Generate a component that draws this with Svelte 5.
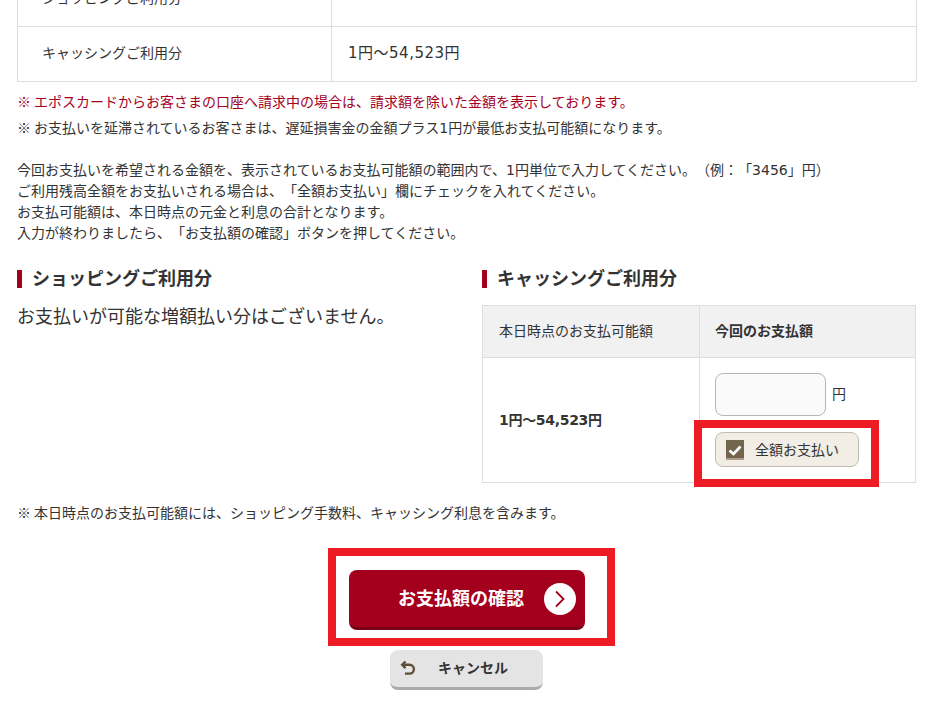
<script>
  const limits = [
    { label: 'ショッピングご利用分', value: '' },
    { label: 'キャッシングご利用分', value: '1円～54,523円' }
  ];

  const guide = [
    '今回お支払いを希望される金額を、表示されているお支払可能額の範囲内で、1円単位で入力してください。（例：「3456」円）',
    'ご利用残高全額をお支払いされる場合は、「全額お支払い」欄にチェックを入れてください。',
    'お支払可能額は、本日時点の元金と利息の合計となります。',
    '入力が終わりましたら、「お支払額の確認」ボタンを押してください。'
  ];

  let payAll = true;
</script>

<div class="page">
  <table class="summary">
    <tbody>
      {#each limits as row}
        <tr>
          <th>{row.label}</th>
          <td>{row.value}</td>
        </tr>
      {/each}
    </tbody>
  </table>

  <p class="note first"><span class="mark">※</span><span class="red">エポスカードからお客さまの口座へ請求中の場合は、請求額を除いた金額を表示しております。</span></p>
  <p class="note"><span class="mark">※</span>お支払いを延滞されているお客さまは、遅延損害金の金額プラス1円が最低お支払可能額になります。</p>

  <div class="guide">
    {#each guide as line}
      <p>{line}</p>
    {/each}
  </div>

  <div class="columns">
    <section class="col-left">
      <h2>ショッピングご利用分</h2>
      <p class="none">お支払いが可能な増額払い分はございません。</p>
    </section>

    <section class="col-right">
      <h2>キャッシングご利用分</h2>
      <table class="pay">
        <thead>
          <tr>
            <th class="avail">本日時点のお支払可能額</th>
            <th class="now">今回のお支払額</th>
          </tr>
        </thead>
        <tbody>
          <tr>
            <td class="range">1円～54,523円</td>
            <td class="entry">
              <div class="amount">
                <input type="text" aria-label="今回のお支払額" />
                <span>円</span>
              </div>
              <label class="all">
                <input type="checkbox" bind:checked={payAll} />
                <span class="box">
                  <svg width="18" height="18" viewBox="0 0 18 18" fill="none" stroke="#fff" stroke-width="2.6">
                    <polyline points="3.5 9.5 7.5 13 14.5 5.5"></polyline>
                  </svg>
                </span>
                <span class="all-text">全額お支払い</span>
              </label>
              <span class="hl hl-check"></span>
            </td>
          </tr>
        </tbody>
      </table>
    </section>
  </div>

  <p class="foot"><span class="mark">※</span>本日時点のお支払可能額には、ショッピング手数料、キャッシング利息を含みます。</p>

  <div class="actions">
    <div class="confirm-wrap">
      <button class="confirm">
        <span class="confirm-text">お支払額の確認</span>
        <span class="circle">
          <svg width="32" height="32" viewBox="0 0 32 32" fill="none" stroke="#a4001e" stroke-width="1.8">
            <polyline points="12 8.5 19.5 16 12 23.5"></polyline>
          </svg>
        </span>
      </button>
      <span class="hl hl-confirm"></span>
    </div>
    <button class="cancel">
      <svg width="16" height="16" viewBox="0 0 16 16" fill="none" stroke="#5c4d38" stroke-width="2.4">
        <path d="M5.5 1.5 L2.2 4.8 L5.5 8.1"></path>
        <path d="M2.4 4.8 H9.5 A4.4 4.4 0 0 1 9.5 13.6 H5"></path>
      </svg>
      <span>キャンセル</span>
    </button>
  </div>
</div>

<style>
  :global(body) {
    margin: 0;
    background: #fff;
  }

  .page {
    height: 709px;
    box-sizing: border-box;
    overflow: hidden;
    padding: 0 14px 0 17px;
    font-family: "DejaVu Sans", "Noto Sans CJK JP", sans-serif;
    font-size: 14px;
    color: #333;
    text-spacing-trim: space-all;
  }

  p {
    margin: 0;
  }

  .mark {
    margin-right: 3px;
    font-family: "Noto Sans CJK JP", sans-serif;
  }

  .summary {
    width: 900px;
    margin-top: -29px;
    border-collapse: collapse;
    table-layout: fixed;
  }

  .summary th,
  .summary td {
    height: 55px;
    padding: 0 0 5px;
    border: 1px solid #ddd;
    font-weight: normal;
    text-align: left;
    box-sizing: border-box;
  }

  .summary th {
    width: 314px;
    padding-left: 24px;
    font-size: 14px;
  }

  .summary td {
    padding-left: 16px;
    font-size: 15px;
    letter-spacing: 0.5px;
  }

  .note {
    line-height: 25px;
  }

  .note.first {
    margin-top: 7px;
  }

  .note.first .mark,
  .red {
    color: #a4001e;
  }

  .guide {
    margin-top: 19px;
    line-height: 21px;
  }

  .columns {
    display: flex;
    margin-top: 26px;
  }

  .col-left {
    width: 465px;
  }

  .col-right {
    width: 434px;
  }

  h2 {
    margin: 0;
    padding-left: 10px;
    border-left: 5px solid #a4001e;
    font-size: 18px;
    line-height: 18px;
    font-weight: bold;
    color: #333;
  }

  .none {
    margin-top: 17px;
    font-size: 18px;
    line-height: 24px;
  }

  .pay {
    width: 434px;
    margin-top: 17px;
    border-collapse: collapse;
    table-layout: fixed;
    font-size: 14px;
  }

  .pay th,
  .pay td {
    padding: 0 15px;
    border: 1px solid #ddd;
    text-align: left;
    box-sizing: border-box;
  }

  .pay th {
    height: 52px;
    padding-bottom: 4px;
    background: #f1f1f1;
  }

  .avail {
    width: 217px;
    font-weight: normal;
  }

  .pay .range {
    padding-left: 16px;
    padding-bottom: 2px;
    font-weight: bold;
    letter-spacing: -0.3px;
  }

  .pay .avail {
    padding-left: 16px;
  }

  .entry {
    position: relative;
    height: 125px;
    vertical-align: top;
  }

  .amount {
    display: flex;
    align-items: center;
    gap: 6px;
    margin-top: 15px;
  }

  .amount span {
    margin-bottom: 4px;
  }

  .amount input {
    width: 111px;
    height: 43px;
    box-sizing: border-box;
    border: 1px solid #b5b5b5;
    border-radius: 8px;
    background: #fafafa;
  }

  .all {
    display: flex;
    align-items: center;
    width: 144px;
    height: 35px;
    box-sizing: border-box;
    margin-top: 16px;
    padding-left: 10px;
    border: 1px solid #c2bcb0;
    border-radius: 8px;
    background: #f2ede5;
  }

  .all input {
    display: none;
  }

  .box {
    display: flex;
    align-items: center;
    justify-content: center;
    width: 18px;
    height: 20px;
    background: #73654c;
    box-shadow: inset 0 -2px 0 #a89e8c;
  }

  .all-text {
    margin-left: 11px;
    margin-bottom: 2px;
  }

  .hl {
    position: absolute;
    box-sizing: border-box;
    border: 8px solid #ed1c24;
    pointer-events: none;
  }

  .hl-check {
    left: -6px;
    top: 62px;
    width: 185px;
    height: 67px;
  }

  .foot {
    margin-top: 19px;
    line-height: 20px;
  }

  .actions {
    display: flex;
    flex-direction: column;
    align-items: center;
    width: 900px;
    margin-top: 47px;
  }

  .confirm-wrap {
    position: relative;
  }

  .confirm {
    display: flex;
    align-items: center;
    width: 236px;
    height: 60px;
    box-sizing: border-box;
    padding: 0 9px 0 49px;
    border: 0;
    border-bottom: 3px solid #760014;
    border-radius: 8px;
    background: #a4001e;
    color: #fff;
    font-family: inherit;
    font-size: 18px;
    font-weight: bold;
  }

  .confirm-text {
    margin-bottom: 4px;
  }

  .circle {
    display: flex;
    margin-left: auto;
    border-radius: 50%;
    background: #fff;
  }

  .hl-confirm {
    left: -21px;
    top: -22px;
    width: 287px;
    height: 98px;
  }

  .cancel {
    display: flex;
    align-items: center;
    width: 153px;
    height: 40px;
    box-sizing: border-box;
    margin: 20px 1px 0 0;
    padding: 0 0 2px 10px;
    border: 0;
    border-bottom: 3px solid #aaa;
    border-radius: 8px;
    background: #e4e4e4;
    color: #333;
    font-family: inherit;
    font-size: 14px;
    font-weight: bold;
  }

  .cancel span {
    margin-left: 22px;
    margin-bottom: 2px;
  }
</style>
